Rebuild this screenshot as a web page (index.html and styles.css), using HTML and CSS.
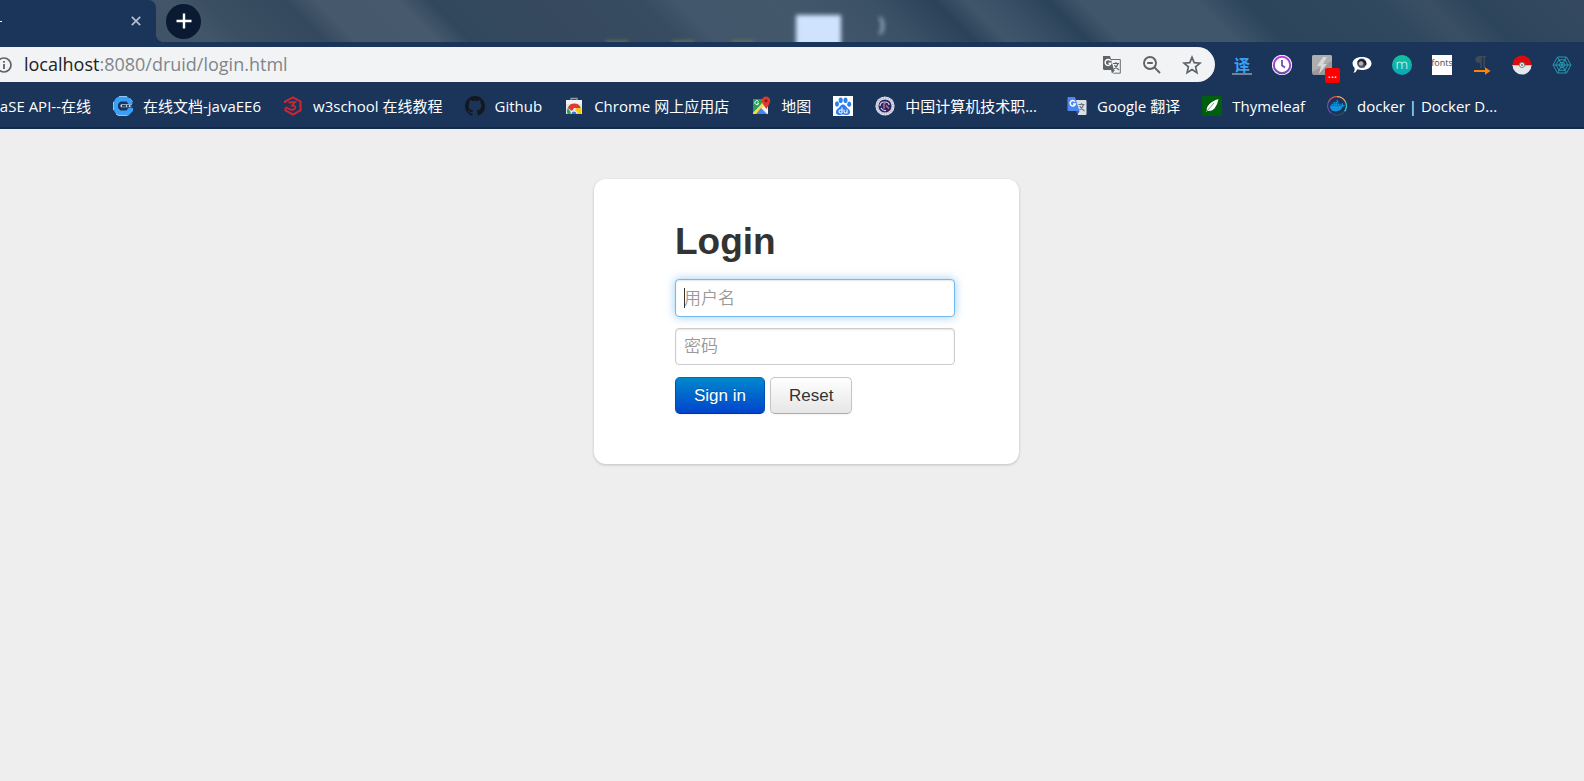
FILE: index.html
```
<!DOCTYPE html>
<html lang="zh-CN">
<head>
<meta charset="utf-8">
<title>Login</title>
<link rel="stylesheet" href="styles.css">
</head>
<body>
<header class="browser">
  <div class="tabstrip">
    <div class="desktop" aria-hidden="true">
      <span class="glass"></span>
      <span class="paren">)</span>
      <span class="speck speck-a"></span><span class="speck speck-b"></span><span class="speck speck-c"></span>
    </div>
    <div class="tab">
      <span class="tab-title"></span>
      <button class="tab-close" aria-label="Close tab"><svg viewBox="0 0 10 10" width="10" height="10"><path d="M.8.8l8.400 8.400M9.200.8L.8 9.200" stroke="#b5bfcc" stroke-width="1.700"/></svg></button>
    </div>
    <button class="new-tab" aria-label="New tab"><svg viewBox="0 0 16 16" width="16" height="16"><path d="M8 .5v15M.5 8h15" stroke="#fff" stroke-width="2.400"/></svg></button>
  </div>

  <div class="toolbar">
    <div class="omnibox">
      <svg class="info" viewBox="0 0 16 16" width="16" height="16"><circle cx="8" cy="8" r="7" fill="none" stroke="#5f6368" stroke-width="1.700"/><path d="M8 7v5M8 4v1.800" stroke="#5f6368" stroke-width="1.800"/></svg>
      <a class="url" href="#"><span class="host">localhost</span>:8080/druid/login.html</a>
      <button aria-label="Translate"><svg viewBox="0 0 20 20" width="20" height="20"><path d="M8 4.500h10.300v13.700h-7" fill="#f1f3f4" stroke="#6b6f73"/><path d="M1 1h7l4 14H2.500Q1 15 1 13.500z" fill="#5f6368"/><path d="M9 15h4l-3 3.500z" fill="#5f6368"/><path d="M8.600 5.800A3 3 0 1 0 9 8.200H6.500" fill="none" stroke="#fff" stroke-width="1.400"/><path d="M11 8.500h6M14 7v1.500M16 8.500q-1 4-4 5.500M12.500 10q1.500 3 4.500 5" fill="none" stroke="#5f6368" stroke-width="1.200"/></svg></button>
      <button aria-label="Zoom"><svg viewBox="0 0 20 20" width="20" height="20"><circle cx="8" cy="8" r="6" fill="none" stroke="#5f6368" stroke-width="1.900"/><path d="M12.400 12.400l5.600 5.600M5.200 8h5.600" stroke="#5f6368" stroke-width="1.900"/></svg></button>
      <button aria-label="Bookmark"><svg viewBox="0 0 20 20" width="20" height="20"><path d="M10 2.300l2.200 5.300 5.800.5-4.400 3.800 1.300 5.700-4.900-3-4.900 3 1.300-5.700L2 8.100l5.800-.5z" fill="none" stroke="#5f6368" stroke-width="1.700"/></svg></button>
    </div>
    <div class="extensions">
      <button class="ext ext-yi" aria-label="译">译</button>
      <button class="ext" aria-label="History"><svg viewBox="0 0 20 20" width="20" height="20"><defs><linearGradient id="vio" x2="0" y2="1"><stop stop-color="#c03be8"/><stop offset="1" stop-color="#6c4bb0"/></linearGradient></defs><circle cx="10" cy="10" r="10.200" fill="#f3eefb"/><circle cx="10" cy="10" r="8.200" fill="#fff" stroke="url(#vio)" stroke-width="2"/><path d="M10 5v5.500l3 2" fill="none" stroke="#7040a8" stroke-width="1.700"/></svg></button>
      <button class="ext ext-flash" aria-label="Flash"><svg viewBox="0 0 20 20" width="20" height="20"><rect width="20" height="20" rx="2" fill="#999"/><path d="M0 2Q0 0 2 0h16q2 0 2 2v4L0 17z" fill="#aeaeae"/><path d="M11 2L5 11h4l-2 8 8-10h-4l4-7z" fill="#d8d8d8"/></svg><span class="badge">...</span></button>
      <button class="ext" aria-label="Chat"><svg viewBox="0 0 20 20" width="20" height="20"><path d="M10 2c5.500 0 9.500 2.700 9.500 6.500S15.500 15 10 15q-2.500 0-4.500-.8Q4 17.500 1.500 18q2-2.500 1-5.200Q.5 11 .5 8.500C.5 4.700 4.500 2 10 2z" fill="#fff"/><circle cx="9.800" cy="8.200" r="4.700" fill="#4a4e62"/><path d="M6 7q3-3.500 7 0l.5 3" fill="none" stroke="#171b36" stroke-width="1.800"/><circle cx="9" cy="8.500" r="2.200" fill="#b8aca8"/><path d="M7 12.500q3-3 6 0z" fill="#3c5fae"/></svg></button>
      <button class="ext" aria-label="m"><svg viewBox="0 0 20 20" width="20" height="20"><defs><linearGradient id="teal" x2="0" y2="1"><stop stop-color="#0cc59a"/><stop offset="1" stop-color="#0ba6bd"/></linearGradient></defs><circle cx="10" cy="10" r="10" fill="url(#teal)"/><path d="M5.200 14V7M5.200 9.300Q5.500 7 7.600 7T10 9.300V14M10 9.300Q10.200 7 12.500 7t2.300 2.300V14" fill="none" stroke="#b4e7e5" stroke-width="1.100"/></svg></button>
      <button class="ext ext-fonts" aria-label="fonts">fonts</button>
      <button class="ext" aria-label="Paragraph direction"><svg viewBox="0 0 20 20" width="20" height="20"><path d="M8 1h6v1.300h-1V13h-1.500V2.300H9.800V13H8.300V8Q3.300 8 3.300 4.500T8 1z" fill="#414b57"/><path d="M2 16h12" stroke="#ff8500" stroke-width="2"/><path d="M13 12.300l5.500 3.700-5.500 3.700z" fill="#ff8500"/></svg></button>
      <button class="ext" aria-label="Ball"><svg viewBox="0 0 20 20" width="20" height="20"><path d="M.5 10a9.500 9.500 0 0 1 19 0z" fill="#dd0c0c"/><path d="M.5 10a9.500 9.500 0 0 0 19 0z" fill="#e2e8ec"/><path d="M.5 10.500h19" stroke="#b8c2ca"/><circle cx="10" cy="10" r="2.600" fill="#e9edf0" stroke="#808a93" stroke-width="1"/><circle cx="10" cy="10" r="1" fill="#777"/></svg></button>
      <button class="ext" aria-label="Web"><svg viewBox="0 0 20 20" width="20" height="20" fill="none" stroke="#249bb0"><path d="M5.500 2h9l4.500 8-4.500 8h-9L1 10zM7 4.800h6l3 5.200-3 5.200H7L4 10zM8.500 7.400h3L13 10l-1.500 2.600h-3L7 10zM1 10h18M5.500 2l9 16M14.500 2l-9 16"/></svg></button>
    </div>
  </div>

  <nav class="bookmarks" aria-label="Bookmarks">
    <a class="mark mark-cut" href="#"><span>aSE API--在线</span></a>
    <a class="mark" href="#"><svg viewBox="0 0 20 20" width="20" height="20"><path d="M6 .5h8l2 1.500 3.500 3.500V8h-4l-2-2.500h-6L5 8v4l2.500 2.500h6l2-2.500H20v3l-4 4-2 1.500H6L3 18l-2.500-4V6L3 2z" fill="#3a9ff5"/><path d="M6 .5h8M16.500 2l3 3.500M.5 6v8M3 18l3 1.500h8" stroke="#8cc8fa" fill="none"/><path d="M8 8.300h11v3H8q-1.500-1.500 0-3z" fill="#b6cfe5"/><path d="M9 9.800h4M14 9.800h2M17.500 9.800h2" stroke="#203c62" stroke-width="1.800"/></svg><span>在线文档-javaEE6</span></a>
    <a class="mark" href="#"><svg viewBox="0 0 20 20" width="20" height="20" fill="none" stroke="#cf2630" stroke-width="2"><path d="M2 7V5.500L10 1.300l7.500 4.200v8.800L10 18.500l-7.500-4.200V12"/><path d="M5.500 6.500L12 6l-3 3.500q4 0 3.200 2.500T7 13.500L2.500 11" stroke-width="1.800"/></svg><span>w3school 在线教程</span></a>
    <a class="mark" href="#"><svg viewBox="0 0 16 16" width="20" height="20"><path fill="#14181d" d="M8 0C3.580 0 0 3.580 0 8c0 3.540 2.290 6.530 5.470 7.590.4.070.55-.17.55-.38 0-.19-.01-.82-.01-1.490-2.010.37-2.530-.49-2.690-.94-.09-.23-.48-.94-.82-1.130-.28-.15-.68-.52-.01-.53.63-.01 1.080.58 1.230.82.72 1.210 1.870.87 2.330.66.07-.52.28-.87.51-1.070-1.780-.2-3.640-.89-3.640-3.950 0-.87.31-1.590.82-2.150-.08-.2-.36-1.020.08-2.120 0 0 .67-.21 2.200.82.64-.18 1.320-.27 2-.27s1.360.09 2 .27c1.530-1.040 2.200-.82 2.200-.82.44 1.100.16 1.920.08 2.120.51.56.82 1.270.82 2.150 0 3.070-1.870 3.750-3.650 3.950.29.25.54.73.54 1.480 0 1.070-.01 1.930-.01 2.200 0 .21.15.46.55.38A8.010 8.010 0 0 0 16 8c0-4.420-3.580-8-8-8z"/></svg><span>Github</span></a>
    <a class="mark" href="#"><svg viewBox="0 0 20 20" width="20" height="20"><path d="M7 5V2.500h6V5" fill="none" stroke="#8d9caf" stroke-width="1.300"/><path d="M2 4h16v14H2z" fill="#e4e6e8"/><path d="M2 4h16v4H2z" fill="#f3f4f5"/><path d="M3.800 12a7 7 0 0 1 13 0H10l-2 3z" fill="#e03a2e"/><path d="M3.800 12L8 18H3.500q-1.500-3 .3-6z" fill="#2aa24c"/><path d="M12 12h5q1 3 0 6h-7z" fill="#f6c915"/><path d="M6.500 18a3.500 3.500 0 0 1 7 0z" fill="#f3f6fa"/><path d="M7.500 18a2.500 2.500 0 0 1 5 0z" fill="#3478dd"/></svg><span>Chrome 网上应用店</span></a>
    <a class="mark" href="#"><svg viewBox="0 0 20 20" width="20" height="20"><path d="M2 3h15v15H2z" fill="#e8eaea"/><path d="M2 3h14L2 17z" fill="#22a05a"/><path d="M2 17L14 4l2 3L5 18H2z" fill="#ffd54a"/><path d="M5 18l5-6 6 6z" fill="#4785ea"/><path d="M11 9l6 6v3z" fill="#fff"/><path d="M7.500 5.500a2 2 0 1 0 .3 1.700H6" fill="none" stroke="#e7fff0"/><path d="M15 .5a4.200 4.200 0 0 1 4.200 4.200Q19 7.500 15.300 13 11 7.500 10.800 4.700A4.200 4.200 0 0 1 15 .5z" fill="#e0382e"/><circle cx="15" cy="4.700" r="1.500" fill="#7c1d1d"/></svg><span>地图</span></a>
    <a class="mark" href="#" aria-label="百度"><svg viewBox="0 0 20 20" width="20" height="20"><path fill="#fff" d="M0 0h20v20H0z"/><g fill="#2b7df0"><ellipse cx="4" cy="8" rx="2" ry="2.700"/><ellipse cx="7.700" cy="4.200" rx="2" ry="2.800"/><ellipse cx="12.500" cy="4.200" rx="2" ry="2.800"/><ellipse cx="16.200" cy="8.300" rx="2" ry="2.700"/><path d="M10 8.500c2.500 0 3 2.500 5.500 4.500s2 6-1.500 6c-2 0-2-.5-4-.5s-2 .5-4 .5c-3.500 0-4-4-1.500-6S7.500 8.500 10 8.500z"/></g><path d="M9 11.500V17M9 14H7.500q-1.500 0-1.500 1.500T7.500 17H9M11 13.500v2q0 1.500 1.500 1.500H14v-3.500" fill="none" stroke="#fff" stroke-width="1.100"/></svg></a>
    <a class="mark" href="#"><svg viewBox="0 0 20 20" width="20" height="20"><circle cx="10" cy="10" r="9.600" fill="#e5e5ec"/><circle cx="10" cy="10" r="8" fill="none" stroke="#b3b1c5" stroke-width="1.500" stroke-dasharray="1.500 1"/><circle cx="10" cy="10" r="6.600" fill="#292766"/><path d="M5 10q0-4 4.500-4T14 9M6 12q1.500 3 5 2.500" fill="none" stroke="#d4d4e4" stroke-width="1.200"/><path d="M9 12.500V8.500q0-1.500 1.500-1M11 9.500l3 3" fill="none" stroke="#cb6686" stroke-width="1.500"/></svg><span>中国计算机技术职...</span></a>
    <a class="mark mark-late" href="#"><svg viewBox="0 0 20 20" width="20" height="20"><path d="M8 4h10.500q1 0 1 1v13q0 1-1 1H11z" fill="#dce0e3"/><path d="M1.500 1H8l4.500 14H1.500Q.5 15 .5 14V2q0-1 1-1z" fill="#4b87ee"/><path d="M9 15h3.500L10.500 19z" fill="#3456b8"/><path d="M8 5.700A2.700 2.700 0 1 0 8.400 8H6" fill="none" stroke="#fff" stroke-width="1.400"/><path d="M11.500 8.500h6M14.500 7v1.500M16.500 8.500q-1 4-4 5.500M12.800 10q1.500 3 4.700 5" fill="none" stroke="#667782" stroke-width="1.200"/></svg><span>Google 翻译</span></a>
    <a class="mark" href="#"><svg viewBox="0 0 20 20" width="20" height="20"><rect width="20" height="20" rx="1" fill="#005f0f"/><path d="M16.500 3Q9 5 5.500 10.500q-1.500 3-.5 4.500 5 .5 7.500-2.500Q15.500 9 16.500 3z" fill="#fff"/><path d="M4 16l8-9" stroke="#7ba783"/></svg><span>Thymeleaf</span></a>
    <a class="mark" href="#"><svg viewBox="0 0 20 20" width="20" height="20"><g fill="none" stroke-width="1.300"><path d="M1.500 6A9.300 9.300 0 0 1 10 .7" stroke="#ed4d4b"/><path d="M10 .7a9.300 9.300 0 0 1 8 4.500" stroke="#f4a862"/><path d="M18 5.200a9.300 9.300 0 0 1-.5 10.300" stroke="#35c5d1"/><path d="M17.500 15.500A9.300 9.300 0 0 1 4 17" stroke="#314961"/><path d="M4 17A9.300 9.300 0 0 1 1.500 6" stroke="#744cae"/></g><path d="M3 9.500h11.500q-.3-2 .8-2.700 1 1 .9 2.200 1 0 1.800.3-.8 1.300-2.300 1.300Q14 15.500 8.500 15.500 3 15.300 3 9.500z" fill="#1292dc"/><path d="M4.500 8.500h9M6.500 6.700h5M9.500 5h2" stroke="#1292dc" stroke-width="1.400" stroke-dasharray="1.700 .4"/></svg><span>docker | Docker D...</span></a>
  </nav>
</header>

<main class="page">
  <form class="card">
    <h1 class="title">Login</h1>
    <div class="field">
      <input class="box box-active" type="text" placeholder="用户名" aria-label="用户名">
      <span class="caret"></span>
    </div>
    <input class="box" type="password" placeholder="密码" aria-label="密码">
    <div class="actions">
      <button class="btn btn-primary" type="button">Sign in</button>
      <button class="btn" type="reset">Reset</button>
    </div>
  </form>
</main>
</body>
</html>
```
FILE: styles.css
```
* { box-sizing: border-box; }

body {
  margin: 0;
  min-height: 100vh;
  background: #eee;
  font-family: "Liberation Sans", "Noto Sans CJK SC", sans-serif;
}

button {
  border: 0;
  padding: 0;
  background: none;
  font: inherit;
}

svg { display: block; flex: none; }

.browser {
  background: #1a345a;
  font-family: "Open Sans", "Noto Sans CJK SC", sans-serif;
  overflow: hidden;
}

/* Tab strip */
.tabstrip {
  position: relative;
  display: flex;
  align-items: center;
  gap: 10px;
  height: 42px;
  overflow: hidden;
  background: linear-gradient(45deg,
    #3f5266 10%, #42566a 13%, #3a4f62 15%, #34495d 20%,
    #45586c 22%, #46596d 27%, #31485c 29%, #36495f 36%, #374c61 42%,
    #42566b 44%, #44586c 50%, #3b5166 56%, #2b4259 60%,
    #3f566b 62%, #3a5066 64%, #2b4359 67%,
    #40566b 69%, #40566a 76%, #2c455b 79%, #2f485d 87%,
    #3a4f64 90%, #2d455b 93%, #34495f 100%);
}

.desktop { position: absolute; inset: 0; }

.desktop span { position: absolute; }

.glass {
  left: 796px;
  top: 15px;
  width: 45px;
  height: 40px;
  background: #cfe3ff;
  filter: blur(2px);
}

.paren {
  left: 878px;
  top: 12px;
  color: #a5bbd2;
  font-size: 20px;
  font-weight: 700;
  line-height: 24px;
  filter: blur(2px);
}

.speck {
  top: 41px;
  height: 4px;
  width: 22px;
  background: #6b7a55;
  filter: blur(2px);
}
.speck-a { left: 606px; }
.speck-b { left: 672px; }
.speck-c { left: 732px; }

.tab {
  position: relative;
  display: flex;
  align-items: center;
  justify-content: space-between;
  width: 156px;
  height: 42px;
  padding-right: 15px;
  border-radius: 0 8px 0 0;
  background: #1a345a;
}

.tab::after {
  content: "";
  position: absolute;
  left: 100%;
  bottom: 0;
  width: 8px;
  height: 8px;
  background: radial-gradient(circle at 100% 0, transparent 8px, #1a345a 8px);
}

.tab-title {
  width: 2px;
  height: 1px;
  background: #fff;
}

.new-tab {
  position: relative;
  display: grid;
  place-items: center;
  width: 35px;
  height: 35px;
  border-radius: 50%;
  background: #0a1a33;
}

/* Toolbar */
.toolbar {
  display: flex;
  align-items: center;
  gap: 17px;
  padding: 5px 12px 0 0;
}

.omnibox {
  flex: 1;
  display: flex;
  align-items: center;
  gap: 20px;
  height: 35px;
  padding-right: 13px;
  border-radius: 0 18px 18px 0;
  background: #f1f3f4;
}

.info { margin-left: -4px; }

.url {
  flex: 1;
  margin-left: -8px;
  padding-bottom: 2px;
  color: #80868b;
  font-size: 18px;
  line-height: 28px;
  text-decoration: none;
}

.host { color: #202124; }

.extensions { display: flex; gap: 20px; }

.ext {
  position: relative;
  width: 20px;
  height: 20px;
}

.ext-yi {
  border-bottom: 2px solid #73839a;
  color: #3ba1f3;
  font: 700 16px/16px "Noto Sans CJK SC", sans-serif;
}

.badge {
  position: absolute;
  left: 13px;
  top: 13px;
  width: 15px;
  height: 15px;
  border-radius: 2px;
  background: #f00;
  color: #fff;
  font-size: 12px;
  line-height: 12px;
}

.ext-fonts {
  display: flex;
  justify-content: center;
  background: #fff;
  color: #444;
  font-size: 9px;
  line-height: 16px;
}

/* Bookmarks */
.bookmarks {
  display: flex;
  align-items: center;
  gap: 22px;
  height: 47px;
  padding-top: 2px;
  border-bottom: 2px solid #122b4c;
  overflow: hidden;
}

.mark {
  display: flex;
  flex: none;
  align-items: center;
  gap: 10px;
  color: #fff;
  font-size: 15px;
  line-height: 22px;
  text-decoration: none;
  white-space: nowrap;
}

.mark-cut {
  justify-content: flex-end;
  width: 91px;
}

.mark-late { margin-left: 8px; }

/* Login page */
.page {
  display: flex;
  justify-content: center;
  padding: 50px 0 50px 29px;
}

.card {
  display: flex;
  flex-direction: column;
  gap: 11px;
  width: 425px;
  padding: 43px 64px 50px 81px;
  border-radius: 12px;
  background: #fff;
  box-shadow: 0 1px 3px rgba(0, 0, 0, .2);
}

.title {
  margin: 0 0 6px;
  color: #333;
  font-size: 37px;
  line-height: 40px;
}

.field { position: relative; }

.box {
  display: block;
  width: 100%;
  height: 37px;
  padding: 0 8px 4px;
  border: 1px solid #ccc;
  border-radius: 4px;
  background: #fff;
  box-shadow: inset 0 1px 2px rgba(0, 0, 0, .1);
  color: #555;
  font: 350 17px/24px "Noto Sans CJK SC", sans-serif;
  outline: 0;
}

.box::placeholder { color: #999; opacity: 1; }

.box-active {
  height: 38px;
  border-color: #74b9ef;
  box-shadow: inset 0 1px 2px rgba(0, 0, 0, .1), 0 0 10px rgba(82, 168, 236, .6);
}

.caret {
  position: absolute;
  left: 9px;
  top: 9px;
  width: 1px;
  height: 20px;
  background: #333;
}

.actions {
  display: flex;
  gap: 5px;
  padding-top: 1px;
}

.btn {
  height: 37px;
  padding: 0 18px;
  border: 1px solid #c5c5c5;
  border-bottom-color: #aaa;
  border-radius: 5px;
  background: linear-gradient(#fff, #e6e6e6);
  box-shadow: 0 1px 2px rgba(0, 0, 0, .05);
  color: #333;
  font-size: 17px;
  line-height: 24px;
}

.btn-primary {
  border-color: #0068b8 #0050b5 #003399;
  background: linear-gradient(#0088cc, #0044cc);
  color: #fff;
  text-shadow: 0 -1px 0 rgba(0, 0, 0, .25);
}
```
